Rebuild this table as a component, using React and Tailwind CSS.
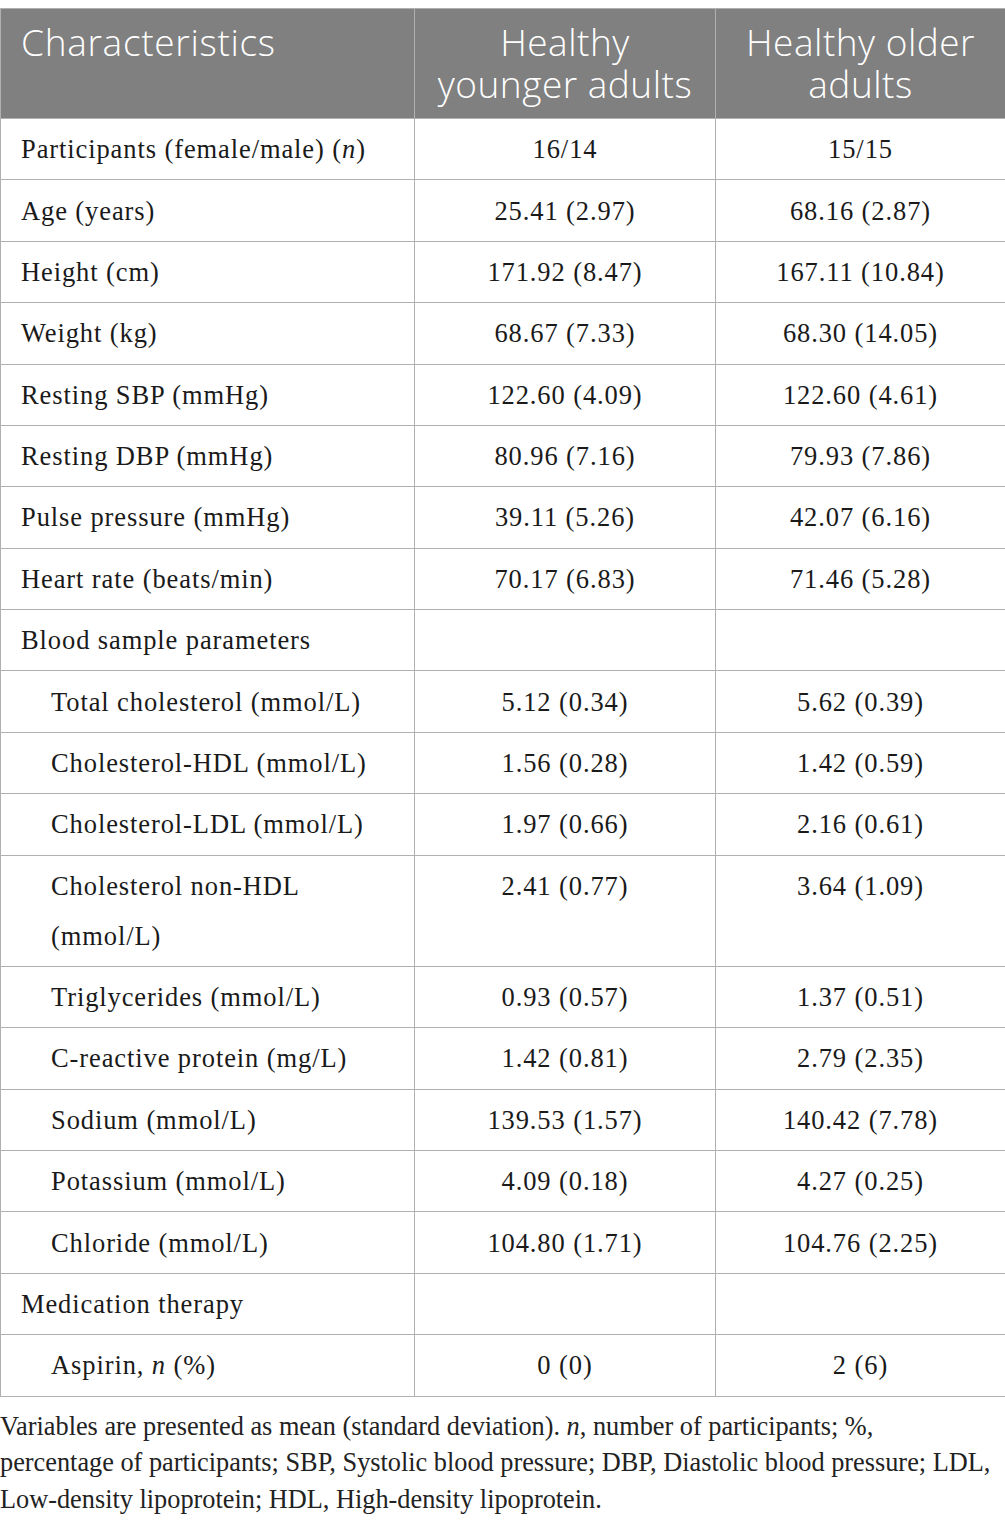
import React from "react";

const rows = [
  { label: <>Participants (female/male) (<i>n</i>)</>, a: "16/14", b: "15/15" },
  { label: "Age (years)", a: "25.41 (2.97)", b: "68.16 (2.87)" },
  { label: "Height (cm)", a: "171.92 (8.47)", b: "167.11 (10.84)" },
  { label: "Weight (kg)", a: "68.67 (7.33)", b: "68.30 (14.05)" },
  { label: "Resting SBP (mmHg)", a: "122.60 (4.09)", b: "122.60 (4.61)" },
  { label: "Resting DBP (mmHg)", a: "80.96 (7.16)", b: "79.93 (7.86)" },
  { label: "Pulse pressure (mmHg)", a: "39.11 (5.26)", b: "42.07 (6.16)" },
  { label: "Heart rate (beats/min)", a: "70.17 (6.83)", b: "71.46 (5.28)" },
  { label: "Blood sample parameters", a: "", b: "" },
  { label: "Total cholesterol (mmol/L)", a: "5.12 (0.34)", b: "5.62 (0.39)", indent: true },
  { label: "Cholesterol-HDL (mmol/L)", a: "1.56 (0.28)", b: "1.42 (0.59)", indent: true },
  { label: "Cholesterol-LDL (mmol/L)", a: "1.97 (0.66)", b: "2.16 (0.61)", indent: true },
  { label: <>Cholesterol non-HDL<br />(mmol/L)</>, a: "2.41 (0.77)", b: "3.64 (1.09)", indent: true },
  { label: "Triglycerides (mmol/L)", a: "0.93 (0.57)", b: "1.37 (0.51)", indent: true },
  { label: "C-reactive protein (mg/L)", a: "1.42 (0.81)", b: "2.79 (2.35)", indent: true },
  { label: "Sodium (mmol/L)", a: "139.53 (1.57)", b: "140.42 (7.78)", indent: true },
  { label: "Potassium (mmol/L)", a: "4.09 (0.18)", b: "4.27 (0.25)", indent: true },
  { label: "Chloride (mmol/L)", a: "104.80 (1.71)", b: "104.76 (2.25)", indent: true },
  { label: "Medication therapy", a: "", b: "" },
  { label: <>Aspirin, <i>n</i> (%)</>, a: "0 (0)", b: "2 (6)", indent: true },
];

export default function App() {
  return (
    <div className="w-[1005px] bg-white pt-[8px] text-[#1a1a1a]">
      <table className="w-[1005px] border-collapse table-fixed">
        <colgroup>
          <col className="w-[414px]" />
          <col className="w-[301px]" />
          <col className="w-[290px]" />
        </colgroup>
        <thead>
          <tr className="bg-[#808080] text-white font-['Open_Sans',sans-serif] text-[37px] leading-[42px]">
            <th className="border border-[#b0b0b0] text-left align-top pl-[20px] pt-[12px] pb-[13px] font-light tracking-[0.7px]">
              Characteristics
            </th>
            <th className="border border-[#b0b0b0] text-center align-top pt-[12px] pb-[13px] font-light tracking-[0.5px]">
              Healthy
              <br />
              younger adults
            </th>
            <th className="border border-[#b0b0b0] text-center align-top pt-[12px] pb-[13px] font-light tracking-[0.5px]">
              Healthy older
              <br />
              adults
            </th>
          </tr>
        </thead>
        <tbody className="font-['Liberation_Serif',serif] text-[26.5px] leading-[50px] tracking-[0.9px]">
          {rows.map((r, i) => (
            <tr key={i}>
              <td
                className={
                  "border border-[#b0b0b0] align-top py-[5.2px] " +
                  (r.indent ? "pl-[50px]" : "pl-[20px]")
                }
              >
                {r.label}
              </td>
              <td className="border border-[#b0b0b0] align-top text-center py-[5.2px]">{r.a}</td>
              <td className="border border-[#b0b0b0] align-top text-center py-[5.2px]">{r.b}</td>
            </tr>
          ))}
        </tbody>
      </table>
      <div className="font-['Liberation_Serif',serif] text-[26.3px] leading-[36.5px] text-[#222] pt-[12px] whitespace-nowrap">
        <div>
          Variables are presented as mean (standard deviation). <i>n</i>, number of participants; %,
        </div>
        <div>
          percentage of participants; SBP, Systolic blood pressure; DBP, Diastolic blood pressure; LDL,
        </div>
        <div>Low-density lipoprotein; HDL, High-density lipoprotein.</div>
      </div>
    </div>
  );
}
